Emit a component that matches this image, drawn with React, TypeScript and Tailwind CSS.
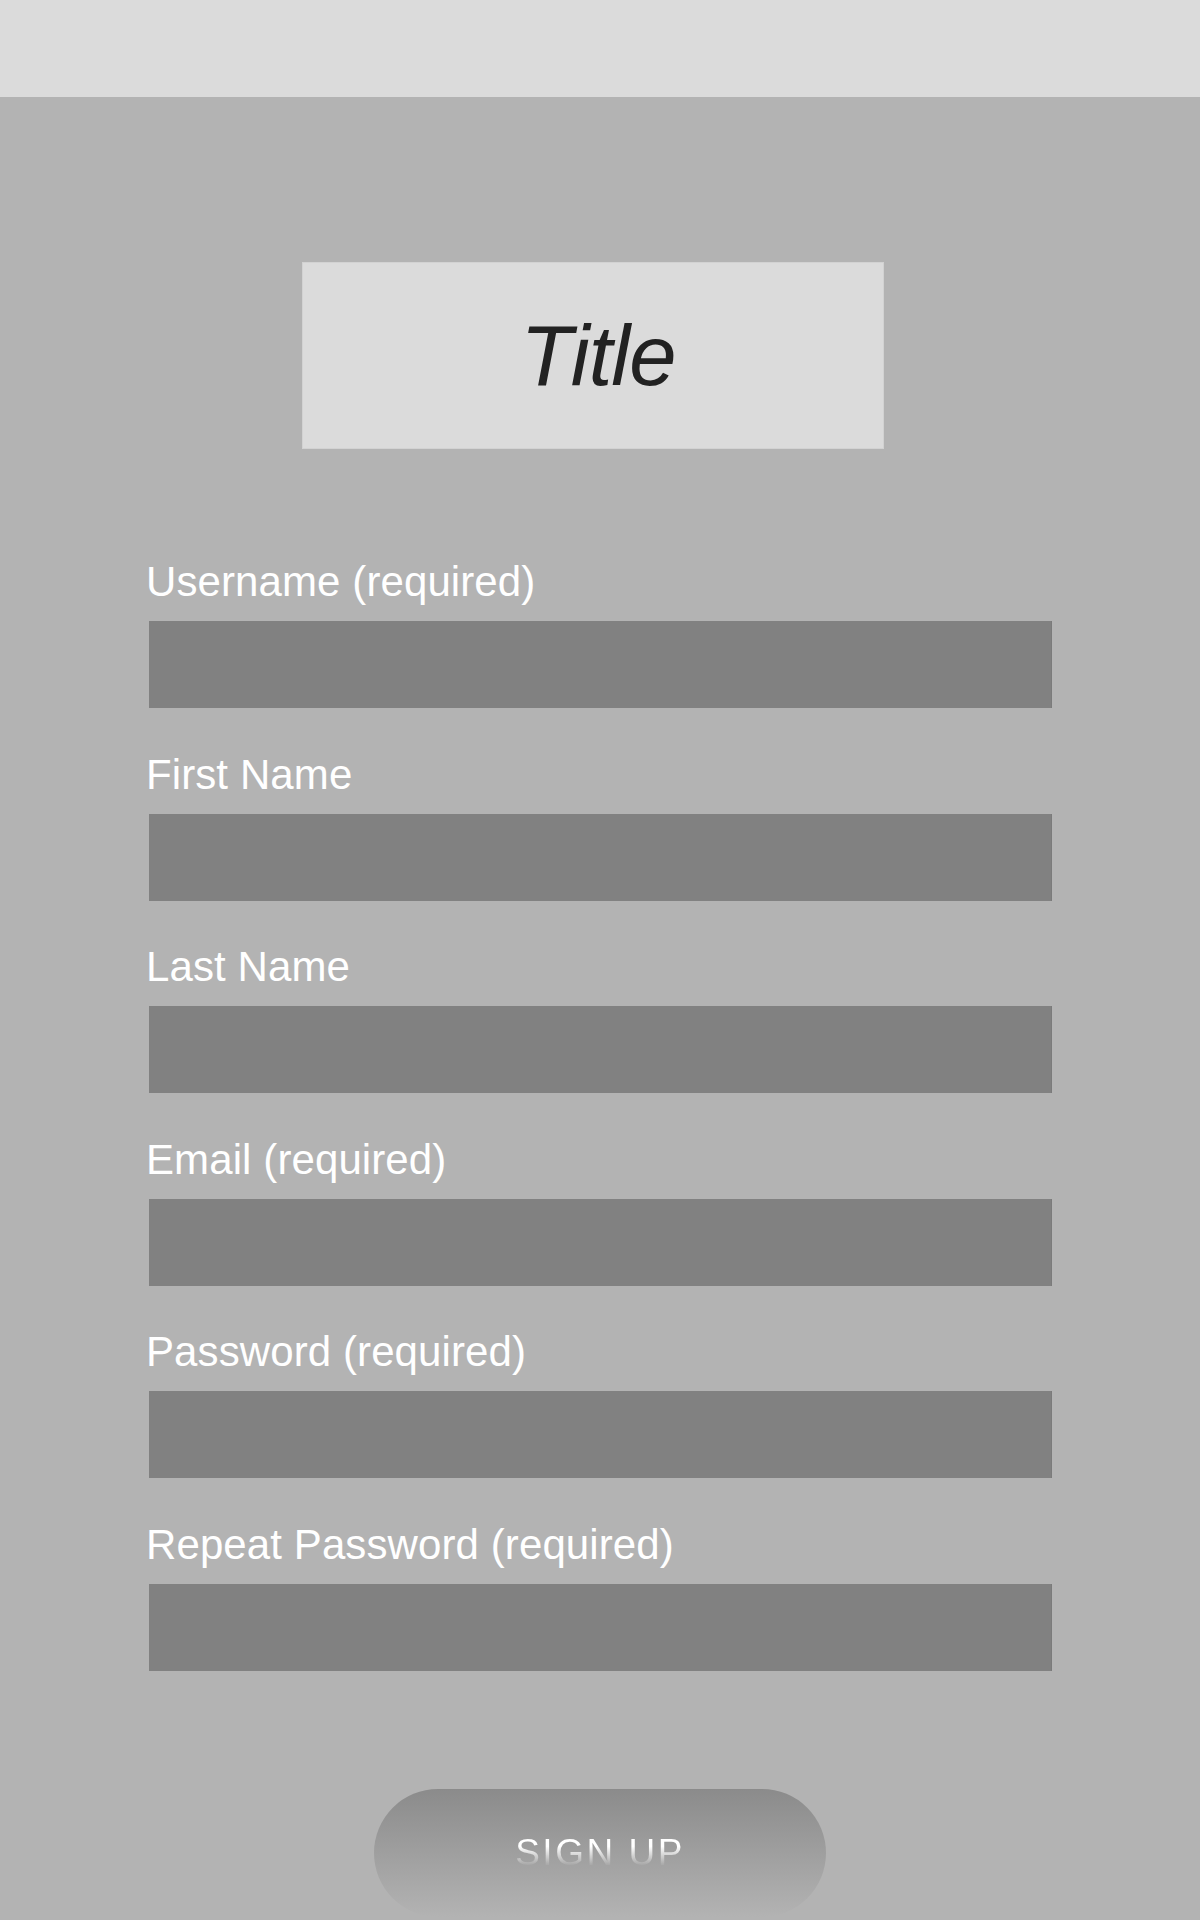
const fields = [
  'Username (required)',
  'First Name',
  'Last Name',
  'Email (required)',
  'Password (required)',
  'Repeat Password (required)',
];

export default function App() {
  return (
    <div className="h-[1920px] overflow-hidden bg-[#b3b3b3] font-['Liberation_Sans',Arial,sans-serif]">
      <div className="h-[97px] bg-[#dbdbdb]" />

      <div className="flex justify-center pt-[165px]">
        <div className="ml-[-14px] flex h-[187px] w-[582px] items-center justify-center border border-[#d2d2d2] bg-[#dbdbdb]">
          <h1 className="pl-[10px] text-[85px] leading-none italic tracking-[-1px] text-[#222222]">Title</h1>
        </div>
      </div>

      <form className="ml-[146px] mt-[109px] flex flex-col gap-[42.6px]">
        {fields.map((label) => (
          <div key={label} className="flex flex-col">
            <label className="h-[48px] text-[42px] leading-[48px] tracking-[0.1px] text-white">{label}</label>
            <input
              type="text"
              className="ml-[3px] mt-[15px] h-[87px] w-[902px] bg-[#818181] shadow-[1px_0_0_#7b7b7b] outline-none"
            />
          </div>
        ))}
      </form>

      <div className="mt-[118px] flex justify-center">
        <button
          type="button"
          className="flex h-[128px] w-[452px] items-center justify-center rounded-full bg-gradient-to-b from-[#8b8b8b] to-[#b3b3b3]"
        >
          <span className="bg-gradient-to-b from-white from-35% to-transparent to-80% bg-clip-text text-[37px] leading-[44px] tracking-[2.5px] text-transparent">
            SIGN UP
          </span>
        </button>
      </div>
    </div>
  );
}
